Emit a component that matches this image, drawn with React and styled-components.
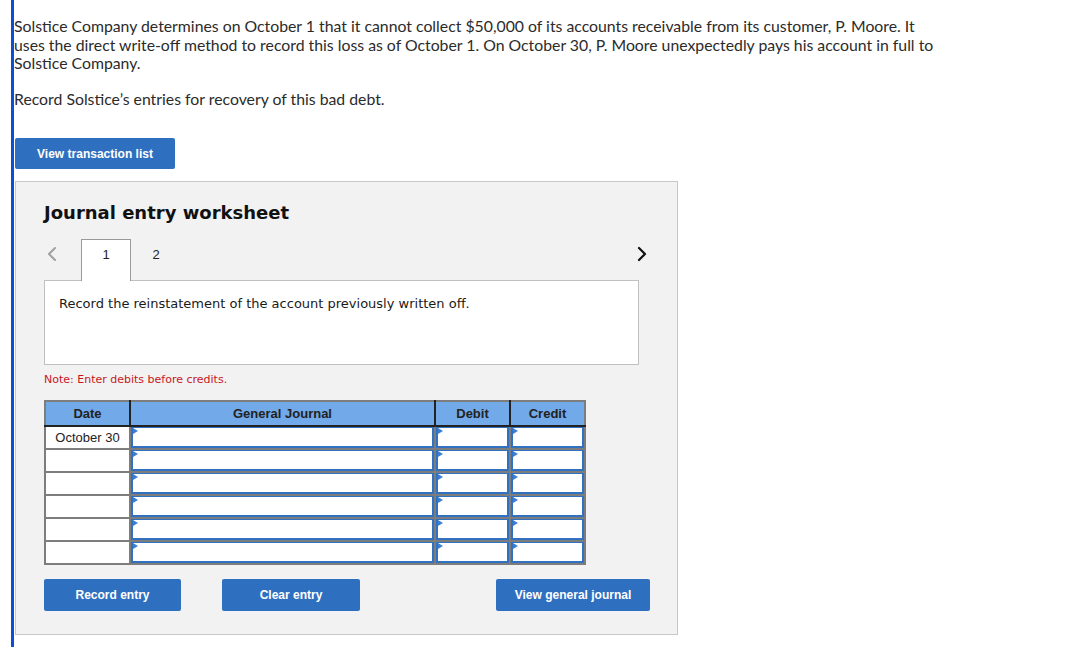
import React from 'react'
import styled, { createGlobalStyle } from 'styled-components'

const GlobalStyle = createGlobalStyle`
  body {
    margin: 0;
    background: #fff;
    font-family: "Lato", "Liberation Sans", sans-serif;
    color: #222;
  }
`

const Page = styled.div`
  padding-left: 11px;
`

const Question = styled.div`
  border-left: 3px solid #0c4fd6;
  padding-top: 17px;
  padding-bottom: 12px;
`

const Para = styled.p`
  margin: 0 0 17px 0;
  width: 1000px;
  font-size: 15.8px;
  line-height: 18.5px;
  color: #2b2b2b;
`

const BlueButton = styled.button`
  display: inline-flex;
  align-items: center;
  justify-content: center;
  width: ${p => p.$w}px;
  height: ${p => p.$h || 32}px;
  background: #2f6fc0;
  border: none;
  border-radius: 2px;
  color: #fff;
  font-family: "Liberation Sans", Arial, sans-serif;
  font-weight: bold;
  font-size: 12px;
  padding: 0;
  cursor: pointer;
`

const TopButtonRow = styled.div`
  padding-left: 1px;
  margin-top: 30px;
`

const Panel = styled.div`
  margin: 12px 0 0 1px;
  box-sizing: border-box;
  width: 663px;
  height: 454px;
  background: #f2f2f2;
  border: 1px solid #c8c8c8;
  padding: 20px 0 0 28px;
`

const Title = styled.h2`
  margin: 0;
  font-family: "DejaVu Sans", Verdana, sans-serif;
  font-weight: bold;
  font-size: 18px;
  line-height: 22px;
  color: #111;
`

const TabRow = styled.div`
  display: flex;
  align-items: stretch;
  height: 41px;
  margin-top: 15px;
  width: 604px;
`

const Arrow = styled.div`
  width: 35px;
  display: flex;
  align-items: center;
  justify-content: ${p => (p.$right ? 'flex-end' : 'flex-start')};
  padding: ${p => (p.$right ? '0 0 12px 0' : '0 0 12px 2px')};
  margin-left: ${p => (p.$right ? 'auto' : '0')};
`

const Tab = styled.div`
  width: 50px;
  box-sizing: border-box;
  display: flex;
  align-items: center;
  justify-content: center;
  padding-bottom: 13px;
  font-family: "Liberation Sans", Arial, sans-serif;
  font-size: 13px;
  color: #222;
  background: ${p => (p.$active ? '#fff' : 'transparent')};
  border: 1px solid ${p => (p.$active ? '#9a9a9a' : 'transparent')};
  border-bottom: none;
  position: relative;
  z-index: 1;
  margin-bottom: -1px;
`

const InfoBox = styled.div`
  width: 595px;
  height: 85px;
  box-sizing: border-box;
  background: #fff;
  border: 1px solid #c0c0c0;
  padding: 15px 0 0 14px;
  font-family: "DejaVu Sans", Verdana, sans-serif;
  font-size: 13px;
  color: #1a1a1a;
`

const Note = styled.div`
  margin-top: 8px;
  font-family: "DejaVu Sans", Verdana, sans-serif;
  font-size: 11px;
  color: #c8161d;
`

const Table = styled.table`
  margin-top: 14px;
  border-collapse: collapse;
  border: 2px solid #7d7d7d;
  table-layout: fixed;
  width: 532px;
  font-family: "Liberation Sans", Arial, sans-serif;
`

const Th = styled.th`
  width: ${p => p.$w}px;
  height: 23px;
  background: #71a9e9;
  border-left: 2px solid #222;
  border-bottom: 2px solid #222;
  font-size: 13px;
  font-weight: bold;
  color: #222;
  padding: 0;
  &:first-child {
    border-left: none;
  }
`

const DateCell = styled.td`
  height: 21px;
  background: #fff;
  border: 2px solid #7d7d7d;
  border-top: none;
  font-size: 13px;
  color: #222;
  text-align: center;
  padding: 0;
`

const InputCell = styled.td`
  height: 21px;
  padding: 0;
  border-left: 2px solid #7d7d7d;
  border-bottom: 2px solid #7d7d7d;
`

const Input = styled.div`
  position: relative;
  height: 21px;
  box-sizing: border-box;
  background: #fff;
  border: 2px solid #3071c2;
  border-top-width: 1px;
  &::before {
    content: '';
    position: absolute;
    left: 0;
    top: 0;
    border-left: 5px solid #3a7fd4;
    border-top: 3px solid transparent;
    border-bottom: 3px solid transparent;
  }
`

const ButtonRow = styled.div`
  display: flex;
  margin-top: 14px;
  width: 606px;
  gap: 41px;
  & > :last-child {
    margin-left: auto;
  }
`

const Chevron = ({ color, dir, w = 2 }) => (
  <svg width="12" height="16" viewBox="0 0 12 16">
    <path
      d={dir === 'left' ? 'M9 2 L3 8 L9 14' : 'M3 2 L9 8 L3 14'}
      fill="none"
      stroke={color}
      strokeWidth={w}
      strokeLinecap="round"
      strokeLinejoin="round"
    />
  </svg>
)

const rows = ['October 30', '', '', '', '', '']

export default function App() {
  return (
    <>
      <GlobalStyle />
      <Page>
        <Question>
          <Para>
            Solstice Company determines on October 1 that it cannot collect $50,000 of its accounts receivable from its customer, P. Moore. It
            <br />
            uses the direct write-off method to record this loss as of October 1. On October 30, P. Moore unexpectedly pays his account in full to
            <br />
            Solstice Company.
          </Para>
          <Para>Record Solstice’s entries for recovery of this bad debt.</Para>
          <TopButtonRow>
            <BlueButton $w={160} $h={31}>View transaction list</BlueButton>
          </TopButtonRow>
          <Panel>
            <Title>Journal entry worksheet</Title>
            <TabRow>
              <Arrow>
                <Chevron dir="left" color="#a0a0a0" w={2} />
              </Arrow>
              <Tab $active>1</Tab>
              <Tab>2</Tab>
              <Arrow $right>
                <Chevron dir="right" color="#111" w={2.2} />
              </Arrow>
            </TabRow>
            <InfoBox>Record the reinstatement of the account previously written off.</InfoBox>
            <Note>Note: Enter debits before credits.</Note>
            <Table>
              <thead>
                <tr>
                  <Th $w={83}>Date</Th>
                  <Th $w={303}>General Journal</Th>
                  <Th $w={73}>Debit</Th>
                  <Th $w={73}>Credit</Th>
                </tr>
              </thead>
              <tbody>
                {rows.map((d, i) => (
                  <tr key={i}>
                    <DateCell>{d}</DateCell>
                    <InputCell><Input /></InputCell>
                    <InputCell><Input /></InputCell>
                    <InputCell><Input /></InputCell>
                  </tr>
                ))}
              </tbody>
            </Table>
            <ButtonRow>
              <BlueButton $w={137}>Record entry</BlueButton>
              <BlueButton $w={138}>Clear entry</BlueButton>
              <BlueButton $w={154}>View general journal</BlueButton>
            </ButtonRow>
          </Panel>
        </Question>
      </Page>
    </>
  )
}
